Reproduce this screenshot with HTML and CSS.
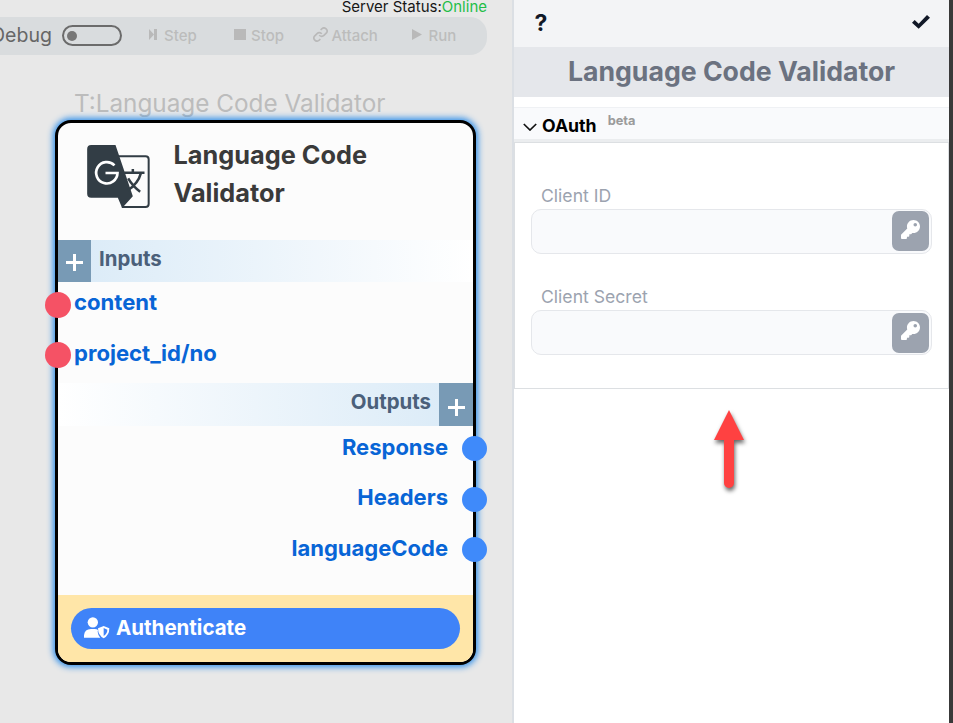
FILE: index.html
```html
<!DOCTYPE html>
<html lang="en">
<head>
<meta charset="utf-8">
<title>Language Code Validator</title>
<link rel="stylesheet" href="styles.css">
</head>
<body>
<main class="app">
  <section class="canvas">
    <div class="status">Server Status:<span class="online">Online</span></div>
    <div class="toolbar">
      <span class="debug">Debug</span>
      <span class="toggle"></span>
      <span class="tool step"><svg width="8" height="11" viewBox="0 0 8 11"><path d="M0 0L5 5.500L0 11ZM5 0H8V11H5Z"/></svg>Step</span>
      <span class="tool stop"><svg width="12" height="11" viewBox="0 0 12 11"><path d="M0 0H12V11H0Z"/></svg>Stop</span>
      <span class="tool attach"><svg class="link" width="15" height="15" viewBox="0 0 24 24"><path d="M10 13a5 5 0 0 0 7.500.5l4-4a5 5 0 0 0-7-7l-2.300 2.300M14 11a5 5 0 0 0-7.500-.5l-4 4a5 5 0 0 0 7 7l2.300-2.300"/></svg>Attach</span>
      <span class="tool run"><svg width="10" height="11" viewBox="0 0 10 11"><path d="M0 0L10 5.500L0 11Z"/></svg>Run</span>
    </div>
    <div class="node-label">T:Language Code Validator</div>
    <article class="node">
      <header class="node-head">
        <svg class="translate" viewBox="140 105 188 189">
          <path fill="none" stroke="#323d45" stroke-width="6" d="M230 139H315Q324.500 139 324.500 148V282Q324.500 291 315 291H244"/>
          <path fill="#323d45" d="M152 105H225L277 259L245 294L232 263H152Q140 263 140 251V117Q140 105 152 105Z"/>
          <path fill="none" stroke="#fff" stroke-width="8" d="M222 166A32 32 0 1 0 231 189H195"/>
          <path fill="none" stroke="#323d45" stroke-width="7.500" d="M251 188H312M277 177V188M301 190Q293 220 262 241M263 205Q277 229 299 245"/>
        </svg>
        <h2>Language Code Validator</h2>
      </header>
      <div class="band inputs"><span class="plus"></span><b>Inputs</b></div>
      <ul class="ports in">
        <li><span>content</span><i class="dot"></i></li>
        <li><span>project_id/no</span><i class="dot"></i></li>
      </ul>
      <div class="band outputs"><b>Outputs</b><span class="plus"></span></div>
      <ul class="ports out">
        <li><span>Response</span><i class="dot"></i></li>
        <li><span>Headers</span><i class="dot"></i></li>
        <li><span>languageCode</span><i class="dot"></i></li>
      </ul>
      <footer class="node-foot">
        <button class="auth">
          <svg width="26" height="22" viewBox="132 111 78 66"><circle cx="158.500" cy="127" r="15.500"/><path d="M132 173V166Q134 147 153 147H164Q171 147 174 150L173 155Q174 166 181 173Z"/><path fill-rule="evenodd" d="M191 138L208 145Q208 166 191 175Q174 166 174 145ZM191 144V168Q202 161 202 149Z"/></svg>
          <span>Authenticate</span>
        </button>
      </footer>
    </article>
  </section>
  <aside class="panel">
    <div class="actions"><span class="help">?</span>
      <svg class="check" width="18" height="14" viewBox="515 43 54 42"><path d="M515 66L523 58L535 69L560 43L569 51L535 84Z"/></svg>
    </div>
    <h1>Language Code Validator</h1>
    <div class="section-head">
      <svg class="chevron" width="14" height="8" viewBox="0 0 14 8"><path d="M.8 1L7 7L13.200 1"/></svg>
      <b>OAuth</b><small>beta</small>
    </div>
    <div class="form">
      <label>Client ID</label>
      <div class="field"><button><svg width="19" height="19" viewBox="0 0 512 512"><path d="M512 176C512 273.200 433.200 352 336 352c-11.200 0-22.200-1-32.800-3l-24 27A24 24 0 0 1 261 384H224v40a24 24 0 0 1-24 24h-40v40a24 24 0 0 1-24 24H24a24 24 0 0 1-24-24v-78c0-6.400 2.500-12.500 7-17l161.800-161.800C163 213.800 160 195.300 160 176 160 78.800 238.800 0 336 0S512 78.500 512 176zM336 128a48 48 0 1 0 96 0a48 48 0 1 0-96 0z"/></svg></button></div>
      <label>Client Secret</label>
      <div class="field second"><button><svg width="19" height="19" viewBox="0 0 512 512"><path d="M512 176C512 273.200 433.200 352 336 352c-11.200 0-22.200-1-32.800-3l-24 27A24 24 0 0 1 261 384H224v40a24 24 0 0 1-24 24h-40v40a24 24 0 0 1-24 24H24a24 24 0 0 1-24-24v-78c0-6.400 2.500-12.500 7-17l161.800-161.800C163 213.800 160 195.300 160 176 160 78.800 238.800 0 336 0S512 78.500 512 176zM336 128a48 48 0 1 0 96 0a48 48 0 1 0-96 0z"/></svg></button></div>
    </div>
    <svg class="arrow" width="30" height="78" viewBox="0 0 30 78"><path d="M15 0L30 30H20V73A5 5 0 0 1 10 73V30H0Z"/></svg>
  </aside>
</main>
</body>
</html>
```

FILE: styles.css
```css
* { box-sizing: border-box; }
body { margin: 0; font-family: Inter, "Liberation Sans", sans-serif; }
h1, h2, ul { margin: 0; padding: 0; }
button { border: 0; padding: 0; font-family: inherit; }
svg { display: block; flex: none; }

.app { display: flex; width: 953px; height: 723px; overflow: hidden; border-right: 4px solid #393939; }
.canvas { position: relative; width: 512px; flex: none; background: #e8e8e8; overflow: hidden; }

.status { height: 17px; padding-right: 25px; text-align: right; font-size: 15px; line-height: 14px; color: #161616; white-space: nowrap; }
.online { color: #1fbe48; }

.toolbar { display: flex; align-items: center; width: 487px; height: 38px; background: #d9dcde; border-radius: 0 17px 17px 0; }
.debug { width: 62px; margin-left: -9px; font-size: 19.500px; color: #666; line-height: 36px; height: 38px; }
.toggle { display: flex; align-items: center; width: 60px; height: 21px; margin: -1px 0 0 9px; padding-left: 3px; border: 2px solid #6b6b6b; border-radius: 11px; }
.toggle::before { content: ""; width: 10px; height: 10px; border-radius: 50%; background: #777; }
.tool { display: flex; align-items: center; height: 38px; padding-bottom: 1px; font-size: 15px; font-weight: 500; color: #bcbcbc; }
.tool svg { fill: #b9b9b9; margin-top: -2px; }
.tool .link { fill: none; stroke: #b9b9b9; stroke-width: 2.6; }
.step { margin-left: 27px; width: 84.500px; gap: 7px; }
.stop { width: 79px; gap: 5.500px; }
.attach { width: 99.500px; gap: 4px; }
.run { gap: 6.500px; }

.node-label { margin: 32px 0 0 74px; font-size: 24.300px; line-height: 32px; color: #bcbcbc; white-space: nowrap; }

.node { position: absolute; left: 55px; top: 120px; width: 421px; height: 545px; display: flex; flex-direction: column; border: 3px solid #000; border-radius: 16px; background: #fcfcfc; box-shadow: 0 0 6px 2px #2f8fea; }
.node-head { display: flex; height: 117px; }
.translate { width: 63px; height: 63px; margin: 22px 0 0 28.500px; }
.node h2 { width: 240px; margin: 13px 0 0 24px; font-size: 25.300px; line-height: 38px; font-weight: 700; color: #3a3a3a; }

.band { display: flex; height: 42px; font-size: 20.400px; line-height: 38px; color: #4b607a; }
.band b { font-weight: 700; }
.inputs { background: linear-gradient(90deg, #d9eaf7, #fff); }
.inputs b { margin-left: 8px; }
.outputs { height: 43px; justify-content: flex-end; background: linear-gradient(270deg, #d9eaf7, #fff); }
.outputs b { margin-right: 8px; }
.plus { display: grid; place-items: center; width: 33px; background: #789ab5; }
.outputs .plus { width: 34px; }
.plus::before { content: ""; width: 17px; height: 17px; margin: 3px 0 0; background: linear-gradient(#fff, #fff) center / 17px 3px no-repeat, linear-gradient(#fff, #fff) center / 3px 17px no-repeat; }
.outputs .plus::before { margin-top: 5px; }

.ports { list-style: none; font-size: 22.100px; font-weight: 700; line-height: 40px; color: #0865d6; }
.ports li { position: relative; height: 50.500px; }
.in { height: 101px; padding-left: 16px; }
.out { height: 169px; padding-right: 25px; text-align: right; line-height: 42px; font-size: 22px; }
.out li:nth-child(2) { line-height: 40px; }
.dot { position: absolute; width: 26px; height: 26px; border-radius: 50%; }
.in .dot { left: -29px; top: 10px; background: #f55265; }
.in li + li .dot { top: 9.500px; }
.out .dot { right: -38.500px; top: 10px; width: 25px; height: 25px; background: #3f8afa; }

.node-foot { flex: 1; padding: 13px 13px; background: #ffe6a8; border-radius: 0 0 13px 13px; }
.auth { display: flex; align-items: center; gap: 6px; width: 389px; height: 41px; padding-left: 13px; border-radius: 21px; background: #3f83f8; color: #fff; font-size: 20.500px; font-weight: 700; line-height: 24px; }
.auth svg { fill: #fff; margin-top: -1px; }
.auth span { margin-top: -1px; }

.panel { flex: 1; border-left: 2px solid #dbdfe4; background: #fff; }
.actions { display: flex; justify-content: space-between; height: 47px; padding: 0 19.500px 0 20.500px; background: #f3f4f6; }
.help { font-size: 23px; line-height: 46px; font-weight: 700; color: #111827; }
.check { margin-top: 14.500px; fill: #111827; }
.panel h1 { height: 50px; background: #e5e7eb; color: #6b7280; font-size: 26.650px; line-height: 49px; font-weight: 700; text-align: center; white-space: nowrap; }
.section-head { display: flex; height: 36px; margin-top: 10px; padding-left: 9px; border-top: 1px solid #eff1f4; border-bottom: 4px solid #ebedef; background: #f9fafc; }
.chevron { margin-top: 15px; fill: none; stroke: #111; stroke-width: 1.700; }
.section-head b { margin-left: 5px; font-size: 17.700px; line-height: 36px; font-weight: 700; }
.section-head small { margin-left: 11px; font-size: 12.800px; line-height: 25px; font-weight: 700; color: #9b9b9b; }
.form { height: 247px; margin-top: -1px; padding: 41px 16px 0 16px; border: 1px solid #dcdfe2; background: #fff; }
.form label { display: block; padding-left: 10px; height: 25px; font-size: 17.600px; line-height: 24px; color: #9ca3af; }
.field { display: flex; justify-content: flex-end; height: 45px; margin-bottom: 31px; padding: 1px 2px; border: 1px solid #e5e7eb; border-radius: 10px; background: #f9fafc; }
.field button { display: flex; justify-content: center; width: 37px; height: 40px; padding-top: 9px; border-radius: 7px; background: #9ca3af; }
.field.second button { margin-top: 1px; padding-top: 8px; }
.field svg { fill: #fff; }
.arrow { margin: 21px 0 0 200px; overflow: visible; fill: #ff4141; filter: drop-shadow(1px 3px 2px rgba(0, 0, 0, .6)); }
```
